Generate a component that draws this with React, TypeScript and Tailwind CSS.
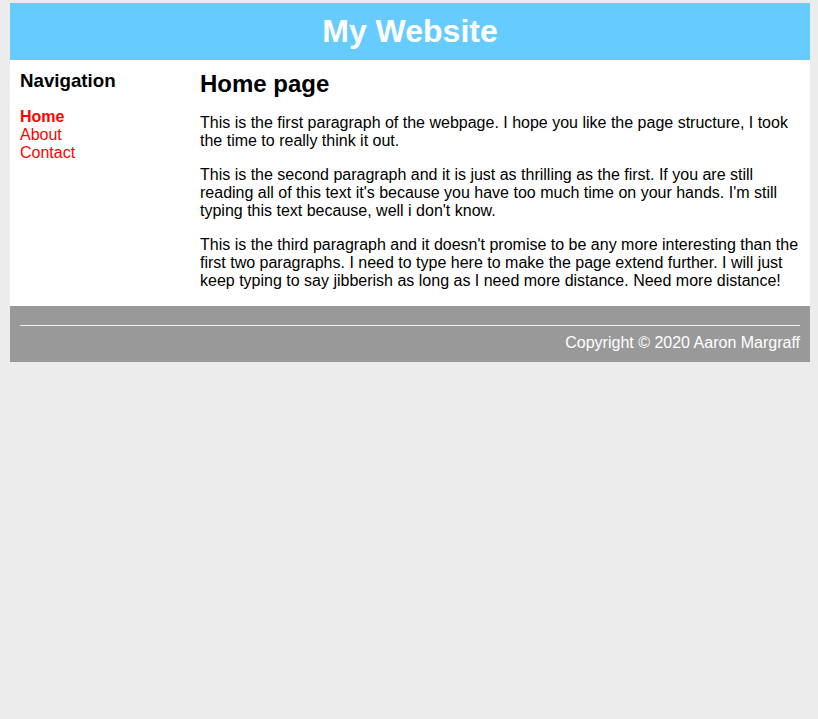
export default function App() {
  return (
    <div className="min-h-[719px] bg-[#ececec] px-[10px] pt-[3px] text-[16px] text-black" style={{ fontFamily: '"Liberation Sans", Arial, sans-serif' }}>
      <div className="w-[800px]">
        <header className="flex h-[57px] items-center justify-center bg-[#66ccff]">
          <h1 className="text-[32px] font-bold leading-[37px] text-white">My Website</h1>
        </header>
        <div className="flex bg-white">
          <nav className="w-[180px] shrink-0 px-[10px] pt-[10px]">
            <h3 className="mb-[16px] text-[18.72px] font-bold leading-[21.5px]">Navigation</h3>
            <ul className="leading-[18px]">
              <li><a className="font-bold text-[#ff0000]">Home</a></li>
              <li><a className="text-[#ff0000]">About</a></li>
              <li><a className="text-[#ff0000]">Contact</a></li>
            </ul>
          </nav>
          <main className="flex-1 px-[10px] pt-[10px]">
            <h2 className="mb-[16px] text-[24px] font-bold leading-[27.6px]">Home page</h2>
            <p className="mb-[16px] leading-[18px]">
              This is the first paragraph of the webpage. I hope you like the page structure, I took the time to really think it out.
            </p>
            <p className="mb-[16px] leading-[18px]">
              This is the second paragraph and it is just as thrilling as the first. If you are still reading all of this text it's because you have too much time on your hands. I'm still typing this text because, well i don't know.
            </p>
            <p className="mb-[16px] leading-[18px]">
              This is the third paragraph and it doesn't promise to be any more interesting than the first two paragraphs. I need to type here to make the page extend further. I will just keep typing to say jibberish as long as I need more distance. Need more distance!
            </p>
          </main>
        </div>
        <footer className="bg-[#999999] px-[10px] pb-[10px] pt-[19px] text-white">
          <hr className="mb-[8px] border-t border-[#eeeeee]" />
          <p className="text-right leading-[18px]">Copyright © 2020 Aaron Margraff</p>
        </footer>
      </div>
    </div>
  );
}
